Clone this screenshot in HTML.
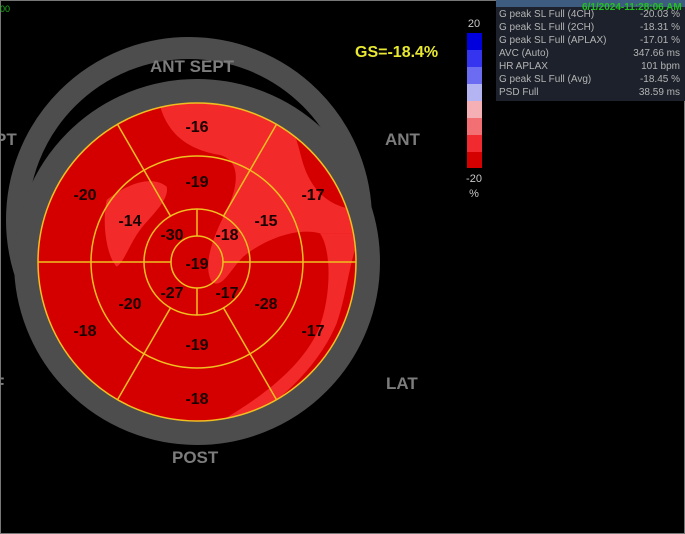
<!DOCTYPE html>
<html><head><meta charset="utf-8"><style>
html,body{margin:0;padding:0;background:#000;}
body{width:685px;height:534px;overflow:hidden;position:relative;font-family:"Liberation Sans",sans-serif;}
.frame{position:absolute;left:0;top:0;width:683px;height:532px;border:1px solid #777;}
.lbl{position:absolute;color:#7c7c7c;font-weight:bold;font-size:17px;}
.panel{position:absolute;left:496px;top:0;width:189px;height:101px;background:#1c212b;}
.row{position:absolute;left:3px;right:5px;height:13px;font-size:10px;color:#b4b4b4;line-height:13px;white-space:nowrap;}
.row span{position:absolute;right:0;top:0;}
</style></head><body>
<div class="frame"></div>
<svg width="685" height="534" style="position:absolute;left:0;top:0">
<defs><clipPath id="c"><circle cx="197" cy="262" r="159"/></clipPath></defs>
<circle cx="189" cy="220" r="172" fill="none" stroke="#4d4d4d" stroke-width="22"/>
<circle cx="197" cy="262" r="171" fill="none" stroke="#4d4d4d" stroke-width="24"/>
<circle cx="197" cy="262" r="159" fill="#d40000"/>
<g clip-path="url(#c)" fill="#f22a2a">
<g transform="translate(30,90) scale(0.33333)">
<path d="M380,0 C395,110 450,175 570,195 C640,215 620,300 590,360 C555,430 515,520 545,575 C575,600 600,540 640,500 C700,450 800,410 870,430 L1000,430 L1000,360 C930,360 870,330 835,260 C805,200 810,140 770,100 L740,0 Z"/>
<path d="M870,430 C905,480 905,620 865,720 C815,830 700,920 560,1000 L640,1000 C760,930 870,820 920,700 C955,600 960,480 1000,430 Z"/>
<path d="M230,330 C280,290 360,250 410,290 C420,330 360,380 330,420 C300,460 280,520 260,530 C230,500 215,400 230,330 Z"/>
</g></g>
<g fill="none" stroke="#f0c020" stroke-width="1.5">
<circle cx="197" cy="262" r="159"/>
<circle cx="197" cy="262" r="106"/>
<circle cx="197" cy="262" r="53"/>
<circle cx="197" cy="262" r="26"/>
<line x1="38" y1="262" x2="144" y2="262"/><line x1="250" y1="262" x2="356" y2="262"/>
<line x1="170.5" y1="216.1" x2="117.5" y2="124.3"/><line x1="223.5" y1="216.1" x2="276.5" y2="124.3"/>
<line x1="170.5" y1="307.9" x2="117.5" y2="399.7"/><line x1="223.5" y1="307.9" x2="276.5" y2="399.7"/>
<line x1="197" y1="209" x2="197" y2="236"/><line x1="197" y1="288" x2="197" y2="315"/>
<line x1="144" y1="262" x2="171" y2="262"/><line x1="223" y1="262" x2="250" y2="262"/>
</g>
<g font-family="Liberation Sans" font-weight="bold" font-size="16" fill="#1a0000" text-anchor="middle">
<text x="197" y="132">-16</text><text x="85" y="200">-20</text><text x="313" y="200">-17</text>
<text x="85" y="336">-18</text><text x="313" y="336">-17</text><text x="197" y="404">-18</text>
<text x="197" y="187">-19</text><text x="130" y="226">-14</text><text x="266" y="226">-15</text>
<text x="130" y="309">-20</text><text x="266" y="309">-28</text><text x="197" y="350">-19</text>
<text x="172" y="240">-30</text><text x="227" y="240">-18</text><text x="172" y="298">-27</text><text x="227" y="298">-17</text>
<text x="197" y="269">-19</text>
</g>
<g>
<rect x="467" y="33" width="15" height="17" fill="#0000dc"/>
<rect x="467" y="50" width="15" height="17" fill="#3535f0"/>
<rect x="467" y="67" width="15" height="17" fill="#6c6cf2"/>
<rect x="467" y="84" width="15" height="17" fill="#b4b4f2"/>
<rect x="467" y="101" width="15" height="17" fill="#f4b0b4"/>
<rect x="467" y="118" width="15" height="17" fill="#f27074"/>
<rect x="467" y="135" width="15" height="17" fill="#f02a2e"/>
<rect x="467" y="152" width="15" height="16" fill="#d40000"/>
</g>
<g font-family="Liberation Sans" font-size="11" fill="#c8c8c8" text-anchor="middle">
<text x="474" y="27">20</text><text x="474" y="182">-20</text><text x="474" y="197">%</text>
</g>
</svg>
<div style="position:absolute;left:355px;top:44px;color:#e8e832;font-weight:bold;font-size:16px;">GS=-18.4%</div>
<div class="lbl" style="left:150px;top:57px;">ANT&nbsp;SEPT</div>
<div class="lbl" style="left:385px;top:130px;">ANT</div>
<div class="lbl" style="left:386px;top:374px;">LAT</div>
<div class="lbl" style="left:172px;top:448px;">POST</div>
<div class="lbl" style="left:-5px;top:130px;">PT</div>
<div class="lbl" style="left:-6px;top:374px;">F</div>
<div style="position:absolute;left:0;top:4px;color:#20b020;font-size:9px;">00</div>
<div class="panel">
<div style="position:absolute;left:0;top:0;width:189px;height:7px;background:#3d5c80;"></div>
<div style="position:absolute;left:86px;top:2px;color:#22c022;font-size:10px;font-weight:bold;white-space:nowrap;">6/1/2024-11:28:06 AM</div>
<div class="row" style="top:8px;">G peak SL Full (4CH)<span>-20.03 %</span></div>
<div class="row" style="top:21px;">G peak SL Full (2CH)<span>-18.31 %</span></div>
<div class="row" style="top:34px;">G peak SL Full (APLAX)<span>-17.01 %</span></div>
<div class="row" style="top:47px;">AVC (Auto)<span>347.66 ms</span></div>
<div class="row" style="top:60px;">HR APLAX<span>101 bpm</span></div>
<div class="row" style="top:73px;">G peak SL Full (Avg)<span>-18.45 %</span></div>
<div class="row" style="top:86px;">PSD Full<span>38.59 ms</span></div>
</div>
</body></html>
